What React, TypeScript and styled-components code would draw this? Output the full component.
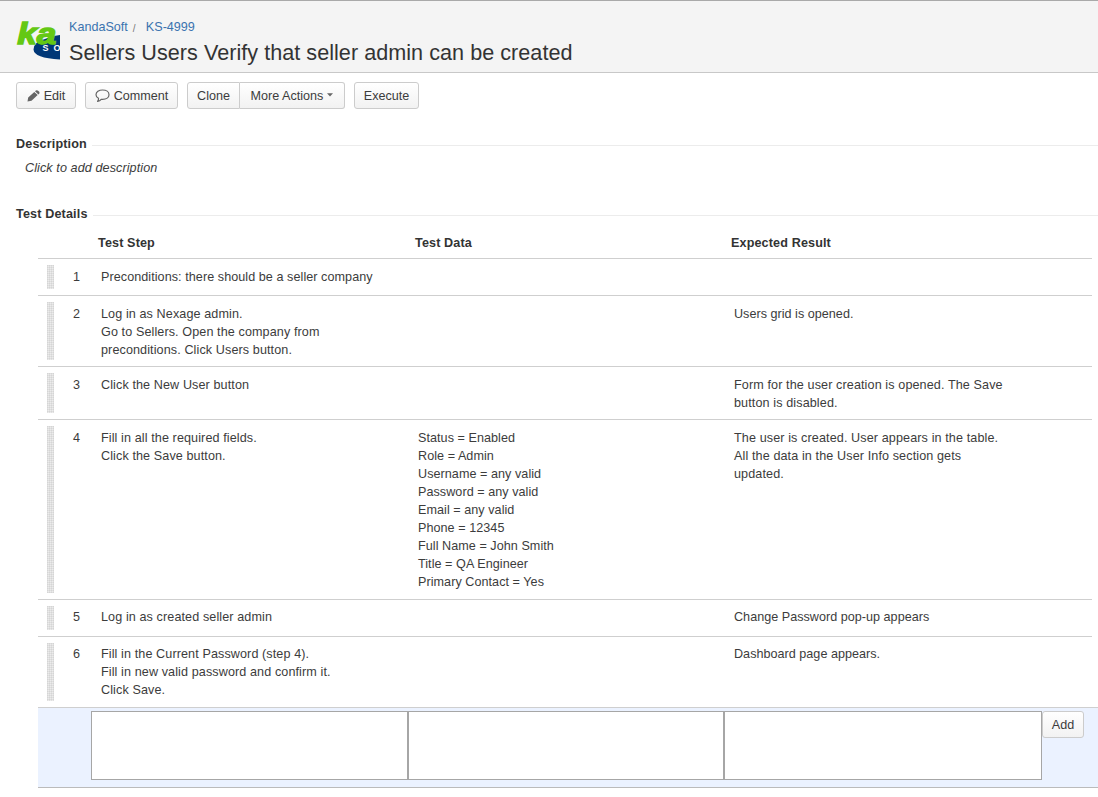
import React from "react";
import styled, { createGlobalStyle } from "styled-components";

const GlobalStyle = createGlobalStyle`
  * { box-sizing: border-box; }
  html, body { margin: 0; background: #fff; }
  body {
    font-family: "Liberation Sans", Arial, sans-serif;
    font-size: 12.6px;
    line-height: 18px;
    color: #3c3c3c;
    overflow: hidden;
  }
`;

const Page = styled.div`
  width: 1098px;
  height: 797px;
  overflow: hidden;
`;

const Header = styled.header`
  display: flex;
  height: 73px;
  padding: 19px 0 0 16px;
  background: #f4f4f4;
  border-top: 1px solid #a9a9a9;
  border-bottom: 1px solid #c8c8c8;
`;

const Logo = styled.svg`
  flex: none;
  width: 44px;
  height: 42px;
`;

const HeaderText = styled.div`
  margin-left: 9px;
`;

const Crumbs = styled.nav`
  display: flex;
  height: 15px;
  line-height: 15px;
  color: #3b73af;
`;

const Slash = styled.span`
  width: 18px;
  padding-left: 5px;
  font-size: 10px;
  line-height: 17px;
  color: #777;
`;

const Title = styled.h1`
  margin: 4px 0 0;
  font-size: 21.6px;
  font-weight: 400;
  line-height: 27px;
  letter-spacing: 0.035px;
  white-space: nowrap;
  color: #333;
`;

const Toolbar = styled.div`
  display: flex;
  gap: 9px;
  padding: 9px 16px 0;
`;

const ButtonGroup = styled.div`
  display: flex;
`;

const Button = styled.button<{ $w: number; $join?: "left" | "right" }>`
  display: flex;
  align-items: center;
  justify-content: center;
  flex: none;
  width: ${(p) => p.$w}px;
  height: 27px;
  padding: 0;
  border: 1px solid #ccc;
  border-left-width: ${(p) => (p.$join === "right" ? 0 : 1)}px;
  border-radius: ${(p) =>
    p.$join === "left" ? "3px 0 0 3px" : p.$join === "right" ? "0 3px 3px 0" : "3px"};
  background: linear-gradient(#fff, #f2f2f2);
  color: #3c3c3c;
  font: inherit;
  white-space: nowrap;
  svg { flex: none; }
`;

const SectionHead = styled.div<{ $top: number }>`
  display: flex;
  align-items: center;
  gap: 5px;
  height: 18px;
  margin: ${(p) => p.$top}px 0 0 16px;
  font-weight: 700;
  color: #333;
  letter-spacing: 0.15px;
  &::after {
    content: "";
    flex: 1;
    height: 1px;
    margin-top: 2px;
    background: #ececec;
  }
`;

const Hint = styled.p`
  margin: 6px 0 0 25px;
  font-style: italic;
  letter-spacing: 0.09px;
`;

const Table = styled.div`
  margin: 11px 0 0 38px;
`;

const TableHead = styled.div`
  display: grid;
  grid-template-columns: 60px 317px 316px 1fr;
  width: 1054px;
  height: 25px;
  font-weight: 700;
  color: #333;
  letter-spacing: 0.13px;
  border-bottom: 1px solid #cfcfcf;
`;

const Row = styled.div<{ $h: number; $pad: number }>`
  display: grid;
  grid-template-columns: 24px 36px 317px 316px 1fr;
  width: 1054px;
  height: ${(p) => p.$h}px;
  padding-top: ${(p) => p.$pad}px;
  border-bottom: 1px solid #cfcfcf;
`;

const Grip = styled.i<{ $h: number; $pad: number }>`
  width: 7px;
  height: ${(p) => p.$h - 13}px;
  margin: ${(p) => 6 - p.$pad}px 0 0 9px;
  background-color: #ececec;
  background-image:
    repeating-linear-gradient(90deg, rgba(0, 0, 0, 0.05) 0 1px, transparent 1px 2px),
    repeating-linear-gradient(rgba(0, 0, 0, 0.05) 0 1px, transparent 1px 2px);
`;

const StepNumber = styled.span`
  padding-left: 11px;
`;

const HeadCell = styled.span``;

const Cell = styled.span<{ $spacing?: number }>`
  padding-left: 3px;
  white-space: pre;
  letter-spacing: ${(p) => p.$spacing ?? 0.1}px;
`;

const AddRow = styled.div`
  display: flex;
  align-items: flex-start;
  width: 1060px;
  height: 80px;
  padding: 3px 0 0 53px;
  background: #ebf2ff;
  border-bottom: 1px solid #bbb;
`;

const Field = styled.textarea<{ $w: number }>`
  display: block;
  flex: none;
  width: ${(p) => p.$w}px;
  height: 69px;
  margin: 0;
  border: 1px solid #a6a6a6;
  border-radius: 0;
  background: #fff;
  resize: none;
  outline: none;
`;

const TopEdge = styled.div`
  width: 1060px;
  height: 1px;
  margin-top: -1px;
  background: #cfcfcf;
`;

type Step = { h: number; pad?: number; step: string; data?: string; result?: string };

const steps: Step[] = [
  { h: 37, step: "Preconditions: there should be a seller company" },
  {
    h: 71,
    step: "Log in as Nexage admin.\nGo to Sellers. Open the company from\npreconditions. Click Users button.",
    result: "Users grid is opened.",
  },
  {
    h: 53,
    step: "Click the New User button",
    result: "Form for the user creation is opened. The Save\nbutton is disabled.",
  },
  {
    h: 180,
    step: "Fill in all the required fields.\nClick the Save button.",
    data: "Status = Enabled\nRole = Admin\nUsername = any valid\nPassword = any valid\nEmail = any valid\nPhone = 12345\nFull Name = John Smith\nTitle = QA Engineer\nPrimary Contact = Yes",
    result: "The user is created. User appears in the table.\nAll the data in the User Info section gets\nupdated.",
  },
  { h: 37, pad: 8, step: "Log in as created seller admin", result: "Change Password pop-up appears" },
  {
    h: 71,
    pad: 8,
    step: "Fill in the Current Password (step 4).\nFill in new valid password and confirm it.\nClick Save.",
    result: "Dashboard page appears.",
  },
];

const Pencil = styled.svg`
  margin-right: 4px;
`;

const Bubble = styled.svg`
  margin-right: 4px;
`;

const CaretMark = styled.svg`
  margin: -1px 0 0 4px;
`;

const PencilIcon = () => (
  <Pencil width="13" height="12" viewBox="0 0 13 12">
    <path
      d="M0.500 11.600 1.200 7.600 7.300 1.900 10.700 5.100 4.500 10.700Z M8 1.300 8.900.5Q10 -.2 11.100.7L12 1.600Q12.900 2.700 12.200 3.700L11.400 4.500Z"
      fill="#666"
    />
  </Pencil>
);

const CommentIcon = () => (
  <Bubble width="15" height="13" viewBox="0 0 15 13">
    <path
      d="M7.6 1C11.3 1 14 3 14 5.700S11.300 10.400 7.600 10.400Q6.900 10.400 6.200 10.300 4.900 12 2.600 12.300 3.700 10.800 3.500 9.300 1 8 1 5.700C1 3 3.900 1 7.600 1Z"
      fill="none"
      stroke="#666"
      strokeWidth="1.2"
      strokeLinejoin="round"
    />
  </Bubble>
);

const Caret = () => (
  <CaretMark width="6" height="4" viewBox="0 0 6 4">
    <path d="M0 .3H6L3 3.5Z" fill="#666" />
  </CaretMark>
);

const BrandLogo = () => (
  <Logo viewBox="0 0 44 42">
    <path d="M44 15Q36 15.500 29 19Q17.500 22 17.500 29.500Q18 38 44 39.500Z" fill="#003777" />
    <text
      x="1.300"
      y="24.300"
      fontFamily="Liberation Sans, Arial, sans-serif"
      fontSize="29"
      fontWeight="700"
      fontStyle="italic"
      fill="#64c814"
      stroke="#64c814"
      strokeWidth="1.4"
      textLength="39"
      lengthAdjust="spacingAndGlyphs"
    >
      ka
    </text>
    <text x="26.500" y="31.300" fontFamily="Liberation Sans, Arial, sans-serif" fontSize="9" fontWeight="700" fill="#fff">
      S
    </text>
    <text x="37.500" y="31.300" fontFamily="Liberation Sans, Arial, sans-serif" fontSize="9" fontWeight="700" fill="#fff">
      O
    </text>
  </Logo>
);

export default function App() {
  return (
    <Page>
      <GlobalStyle />
      <Header>
        <BrandLogo />
        <HeaderText>
          <Crumbs>
            <span>KandaSoft</span>
            <Slash>/</Slash>
            <span>KS-4999</span>
          </Crumbs>
          <Title>Sellers Users Verify that seller admin can be created</Title>
        </HeaderText>
      </Header>
      <Toolbar>
        <Button $w={60}>
          <PencilIcon />
          Edit
        </Button>
        <Button $w={93}>
          <CommentIcon />
          Comment
        </Button>
        <ButtonGroup>
          <Button $w={53} $join="left">Clone</Button>
          <Button $w={105} $join="right">
            More Actions
            <Caret />
          </Button>
        </ButtonGroup>
        <Button $w={65}>Execute</Button>
      </Toolbar>
      <SectionHead $top={26}>Description</SectionHead>
      <Hint>Click to add description</Hint>
      <SectionHead $top={28}>Test Details</SectionHead>
      <Table>
        <TableHead>
          <HeadCell />
          <HeadCell>Test Step</HeadCell>
          <HeadCell>Test Data</HeadCell>
          <HeadCell>Expected Result</HeadCell>
        </TableHead>
        {steps.map((s, i) => (
          <Row key={i} $h={s.h} $pad={s.pad ?? 9}>
            <Grip $h={s.h} $pad={s.pad ?? 9} />
            <StepNumber>{i + 1}</StepNumber>
            <Cell $spacing={i === 0 ? 0.06 : 0.1}>{s.step}</Cell>
            <Cell $spacing={0.05}>{s.data}</Cell>
            <Cell $spacing={i === 2 || i === 3 ? 0.11 : 0.02}>{s.result}</Cell>
          </Row>
        ))}
        <TopEdge />
        <AddRow>
          <Field $w={317} aria-label="Test Step" />
          <Field $w={316} aria-label="Test Data" />
          <Field $w={318} aria-label="Expected Result" />
          <Button $w={42}>Add</Button>
        </AddRow>
      </Table>
    </Page>
  );
}
